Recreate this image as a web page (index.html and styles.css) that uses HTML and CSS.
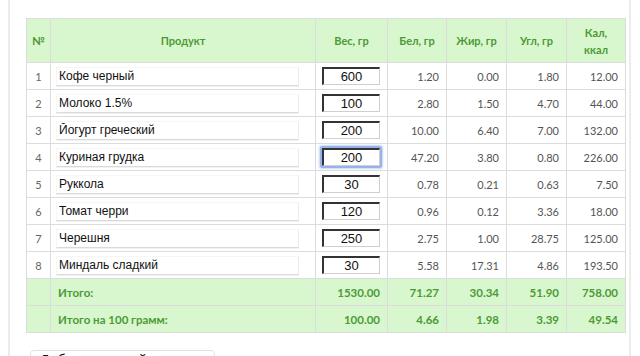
FILE: index.html
```
<!DOCTYPE html>
<html lang="ru">
<head>
<meta charset="utf-8">
<link rel="stylesheet" href="styles.css">
</head>
<body>
<div class="panel">
  <table class="food">
    <colgroup>
      <col class="c-num"><col class="c-name"><col class="c-w"><col class="c-b"><col class="c-f"><col class="c-u"><col class="c-k">
    </colgroup>
    <thead>
      <tr>
        <th>№</th><th>Продукт</th><th>Вес, гр</th><th>Бел, гр</th><th>Жир, гр</th><th>Угл, гр</th><th>Кал,<br>ккал</th>
      </tr>
    </thead>
    <tbody>
      <tr><td class="idx">1</td><td><input class="name" value="Кофе черный"></td><td><input class="weight" value="600"></td><td class="n">1.20</td><td class="n">0.00</td><td class="n">1.80</td><td class="n">12.00</td></tr>
      <tr><td class="idx">2</td><td><input class="name" value="Молоко 1.5%"></td><td><input class="weight" value="100"></td><td class="n">2.80</td><td class="n">1.50</td><td class="n">4.70</td><td class="n">44.00</td></tr>
      <tr><td class="idx">3</td><td><input class="name" value="Йогурт греческий"></td><td><input class="weight" value="200"></td><td class="n">10.00</td><td class="n">6.40</td><td class="n">7.00</td><td class="n">132.00</td></tr>
      <tr><td class="idx">4</td><td><input class="name" value="Куриная грудка"></td><td><input class="weight focus" value="200"></td><td class="n">47.20</td><td class="n">3.80</td><td class="n">0.80</td><td class="n">226.00</td></tr>
      <tr><td class="idx">5</td><td><input class="name" value="Руккола"></td><td><input class="weight" value="30"></td><td class="n">0.78</td><td class="n">0.21</td><td class="n">0.63</td><td class="n">7.50</td></tr>
      <tr><td class="idx">6</td><td><input class="name" value="Томат черри"></td><td><input class="weight" value="120"></td><td class="n">0.96</td><td class="n">0.12</td><td class="n">3.36</td><td class="n">18.00</td></tr>
      <tr><td class="idx">7</td><td><input class="name" value="Черешня"></td><td><input class="weight" value="250"></td><td class="n">2.75</td><td class="n">1.00</td><td class="n">28.75</td><td class="n">125.00</td></tr>
      <tr><td class="idx">8</td><td><input class="name" value="Миндаль сладкий"></td><td><input class="weight" value="30"></td><td class="n">5.58</td><td class="n">17.31</td><td class="n">4.86</td><td class="n">193.50</td></tr>
    </tbody>
    <tfoot>
      <tr><td></td><td class="label">Итого:</td><td class="n">1530.00</td><td class="n">71.27</td><td class="n">30.34</td><td class="n">51.90</td><td class="n">758.00</td></tr>
      <tr><td></td><td class="label">Итого на 100 грамм:</td><td class="n">100.00</td><td class="n">4.66</td><td class="n">1.98</td><td class="n">3.39</td><td class="n">49.54</td></tr>
    </tfoot>
  </table>
  <div class="add">Добавить новый продукт</div>
</div>
</body>
</html>
```

FILE: styles.css
```
html, body {
  margin: 0;
  padding: 0;
  background: #fff;
  overflow: hidden;
}
body {
  font-family: Lato, "Open Sans", sans-serif;
  font-size: 11px;
  color: #555;
}
.panel {
  margin: 0 9px 0 8px;
  border-left: 2px solid #ececec;
  border-right: 2px solid #ececec;
  padding: 18px 0 0 16px;
  height: 356px;
  box-sizing: border-box;
}
.food {
  border-collapse: collapse;
  table-layout: fixed;
  width: 599px;
}
.c-num { width: 24px; }
.c-name { width: 265px; }
.c-w { width: 72px; }
.c-b { width: 59px; }
.c-f { width: 60px; }
.c-u { width: 60px; }
.c-k { width: 59px; }
.food th,
.food td {
  border: 1px solid #dcdcdc;
  padding: 0;
}
.food th {
  background: #d8f7cf;
  color: #4d9a35;
  font-weight: 700;
  font-size: 11px;
  line-height: 17px;
  height: 43px;
  text-align: center;
}
.food tbody td {
  height: 26px;
}
.food tfoot td {
  height: 26px;
  background: #d8f7cf;
  color: #4d9a35;
  font-weight: 700;
  font-size: 11.5px;
}
.idx {
  text-align: center;
  color: #666;
}
.n {
  text-align: right;
  padding-right: 7px !important;
}
.label {
  padding-left: 7px !important;
}
.name {
  display: block;
  box-sizing: border-box;
  width: 243px;
  height: 19px;
  margin-left: 5px;
  padding: 0 0 0 2px;
  border: 1px solid #f6f6f6;
  border-bottom: 1px solid #dadada;
  border-right: 1px solid #ececec;
  box-shadow: 0 1px 0 #f2f2f2;
  font-family: "Liberation Sans", Arial, sans-serif;
  font-size: 12px;
  color: #111;
  background: #fff;
  outline: none;
}
.weight {
  display: block;
  box-sizing: border-box;
  width: 58px;
  height: 18px;
  margin-left: 6px;
  padding: 0;
  border-style: solid;
  border-width: 2px 1px 1px 2px;
  border-color: #333 #cfcfcf #cfcfcf #333;
  font-family: "Liberation Sans", Arial, sans-serif;
  font-size: 13px;
  text-align: center;
  color: #111;
  background: #fff;
  outline: none;
}
.weight.focus {
  box-shadow: 0 0 0 2px #95b3ea, 0 0 2px 3px #c6d6f3;
  border-radius: 1px;
}
.add {
  margin: 17px 0 0 4px;
  width: 185px;
  box-sizing: border-box;
  border: 1px solid #e2e2e2;
  border-radius: 4px;
  padding: 0 9px;
  line-height: 18px;
  font-family: "Liberation Sans", Arial, sans-serif;
  font-size: 14px;
  color: #111;
}
```
